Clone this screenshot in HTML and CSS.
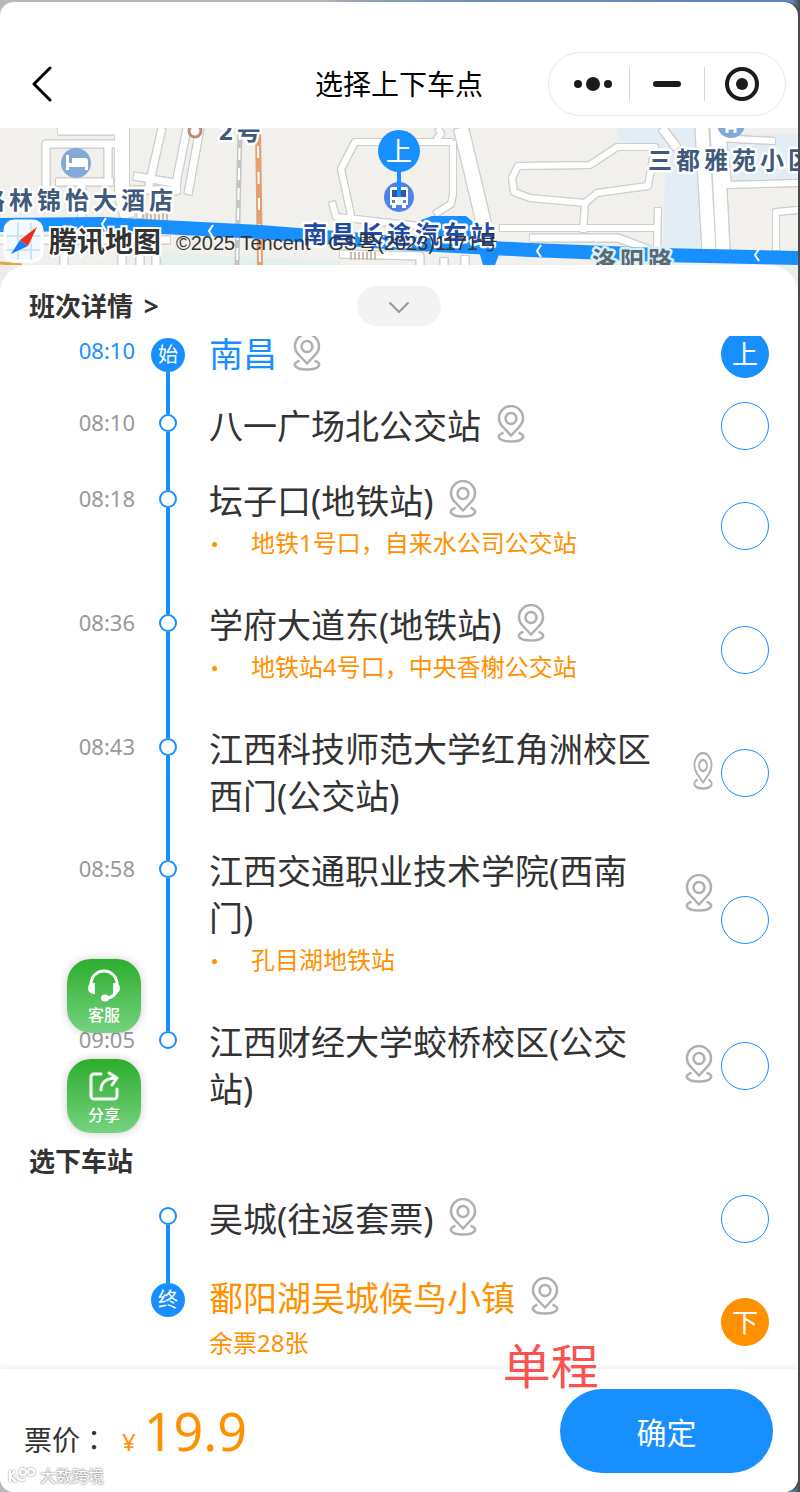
FILE: index.html
```html
<!DOCTYPE html>
<html lang="zh-CN">
<head>
  <meta charset="UTF-8">
  <meta name="viewport" content="width=device-width, initial-scale=1">
  <title>选择上下车点</title>
  <link rel="stylesheet" href="styles.css">
</head>

<body>
  <!-- shared icons -->
  <svg class="sprite" aria-hidden="true">
    <symbol id="pin" viewBox="0 0 28 38" preserveAspectRatio="none">
      <path d="M14 30.500L5.500 21.500A12 12 0 1 1 22.500 21.500Z" />
      <circle cx="14" cy="13.500" r="5.500" />
      <path d="M6.500 27.800C-1 30 0 36.500 14 36.500S29 30 21.500 27.800" />
    </symbol>
  </svg>

  <div class="app">
    <header class="topbar">
      <button class="back" aria-label="返回">
        <svg width="22" height="36" viewBox="0 0 22 36"><path d="M19 2L3 18L19 34" /></svg>
      </button>
      <h1>选择上下车点</h1>
      <div class="capsule">
        <button aria-label="更多">
          <svg width="40" height="20" viewBox="0 0 40 20"><circle cx="6" cy="10" r="4" /><circle cx="21" cy="10" r="7" /><circle cx="36" cy="10" r="4" /></svg>
        </button>
        <button aria-label="最小化">
          <svg width="28" height="6" viewBox="0 0 28 6"><rect width="28" height="6" rx="3" /></svg>
        </button>
        <button aria-label="关闭">
          <svg width="36" height="36" viewBox="0 0 36 36"><circle class="ring" cx="18" cy="18" r="15" /><circle cx="18" cy="18" r="6" /></svg>
        </button>
      </div>
    </header>

    <div class="map">
      <svg viewBox="0 0 798 137" preserveAspectRatio="xMidYMid slice">
        <defs>
          <g id="roads">
            <path stroke-width="7" d="M58 3H120M46 62V16H116M56 54H113M82 56V96M108 16V54" />
            <path stroke-width="7" d="M120 62H180M134 48L180 56M162 0L148 62M187 0L174 66M188 66L200 0M141 70V90" />
            <path stroke-width="14" d="M122 0V68L128 90" />
            <path stroke-width="7" d="M0 112H170M64 110V140M122 118V140M140 112V140M156 118V140" />
            <path stroke-width="6" d="M352 92L341 41L355 14H453M438 0L441 6L436 12M332 74L336 89L420 98M453 13V66L451 76L435 86" />
            <path stroke-width="14" d="M461 0L484 96" />
            <path stroke-width="6" d="M585 75L530 70L514 64L512 50L518 38L590 37L617 19H655L648 58L597 65L585 75L583 104M500 100H657M658 80L657 122" />
            <path stroke-width="8" d="M662 0L677 20" />
            <path stroke-width="7" d="M530 110H618L650 122M340 126L420 128V140M444 130V140M465 128V140" />
            <path stroke-width="13" d="M702 0L709 122M717 0L723 122" />
            <path stroke-width="6" d="M717 10L775 13M723 12L728 57L798 55M776 122V84L798 82" />
          </g>
          <clipPath id="tile"><rect x="5" y="93" width="37" height="40" rx="9" /></clipPath>
        </defs>

        <rect width="798" height="137" fill="#f1f0ed" />
        <path fill="#e2edf6" d="M616 0H697L702 122H663L665 50L652 19L620 13Z" />
        <path fill="#e2edf6" d="M718 6H798V60H720Z" />
        <path fill="#e4f1ea" d="M165 125L340 133V137H150Z" />

        <use href="#roads" class="road-edge" />
        <use href="#roads" class="road" />
        <path class="stairs" d="M142 89H168M350 128H376" />

        <path stroke="#c4c4c4" stroke-width="5" d="M240 0L237 137" />
        <path stroke="#fff" stroke-width="2" stroke-dasharray="12 8" d="M240 0L237 137" />
        <path stroke="#e5a070" stroke-width="6" d="M258 0L260 137" />
        <path stroke="#fff" stroke-width="2" stroke-dasharray="12 14" d="M258 18L260 137" />
        <path stroke="#e3a83a" stroke-width="3" d="M0 135L22 137" />

        <path fill="#188fff" d="M421 92L432 88L466 88L478 98L500 124L495 137H483L478 120L425 108Z" />
        <path class="route" d="M0 97L103 96L260 104L400 115L530 122L660 127L798 130" />
        <path class="arrow" d="M106 90L102 96L106 103M213 97L209 103L213 110M541 117L537 123L541 129M759 121L755 127L759 133" />

        <circle cx="195" cy="3" r="6" fill="#fff" stroke="#b98c7d" stroke-width="3" />
        <circle cx="731" cy="-4" r="14" fill="#82a9d8" />
        <path stroke="#fff" stroke-width="3" d="M727 -2V5M735 -2V5M727 0H735" />
        <circle cx="76" cy="35" r="15" fill="#82a9d8" />
        <path fill="#fff" d="M66 27h3v8h3v-5h13a3 3 0 0 1 3 3v9h-3v-3H69v3h-3z" />

        <text class="label" x="-19" y="81">格林锦怡大酒店</text>
        <text class="label" x="219" y="12">2号</text>
        <text class="label" x="648" y="41">三都雅苑小区</text>
        <text class="label road-name" x="592" y="141">洛阳路</text>
        <text class="label station" x="303" y="115">南昌长途汽车站</text>

        <!-- bus station and boarding marker -->
        <circle cx="399" cy="69" r="15" fill="#4f83e8" />
        <path fill="#fff" d="M392 59h14a2 2 0 0 1 2 2v16h-2v3h-4v-3h-6v3h-4v-3h-2V61a2 2 0 0 1 2-2z" />
        <path fill="#33569c" d="M392 62h14v7h-14z" />
        <path fill="#4f83e8" d="M392 72h3v3h-3zM403 72h3v3h-3z" />
        <rect x="397" y="42" width="4" height="27" fill="#188fff" />
        <circle cx="399" cy="23" r="21" fill="#188fff" />
        <text class="marker" x="399" y="33">上</text>

        <g clip-path="url(#tile)">
          <rect x="5" y="93" width="37" height="40" fill="#f3f9ff" />
          <path fill="none" stroke="#c8e6f5" stroke-width="2" d="M5 108H42M5 122H42M18 93V133M31 93V133" />
          <path fill="#f02d1c" d="M37 99L20 112L28 118Z" />
          <path fill="#1f7cf0" d="M11 126L20 112L28 118Z" />
        </g>
        <rect class="tile-edge" x="5" y="93" width="37" height="40" rx="9" />
        <text class="brand" x="49" y="124">腾讯地图</text>
        <text class="copyright" x="176" y="122">©2025 Tencent - GS粤(2023)1171号</text>
      </svg>
    </div>

    <main class="sheet">
      <div class="sheet-head">
        <a class="section-title" href="#detail">班次详情 <span>&gt;</span></a>
        <button class="handle" aria-label="收起">
          <svg width="22" height="14" viewBox="0 0 22 14"><path d="M2 2L11 11L20 2" /></svg>
        </button>
      </div>

      <div class="stops" id="detail">
        <div class="stop start">
          <time>08:10</time>
          <div class="rail"><span class="badge">始</span></div>
          <div class="stop-main">
            <div class="info">
              <div class="name"><span>南昌</span><svg class="pin"><use href="#pin" /></svg></div>
            </div>
            <label class="pick"><input type="radio" name="on" aria-label="南昌" checked><span>上</span></label>
          </div>
        </div>

        <div class="stop">
          <time>08:10</time>
          <div class="rail"><i class="dot"></i></div>
          <div class="stop-main">
            <div class="info">
              <div class="name"><span>八一广场北公交站</span><svg class="pin"><use href="#pin" /></svg></div>
            </div>
            <label class="pick"><input type="radio" name="on" aria-label="八一广场北公交站"></label>
          </div>
        </div>

        <div class="stop">
          <time>08:18</time>
          <div class="rail"><i class="dot"></i></div>
          <div class="stop-main">
            <div class="info">
              <div class="name"><span>坛子口(地铁站)</span><svg class="pin"><use href="#pin" /></svg></div>
              <ul class="note"><li>地铁1号口，自来水公司公交站</li></ul>
            </div>
            <label class="pick"><input type="radio" name="on" aria-label="坛子口(地铁站)"></label>
          </div>
        </div>

        <div class="stop">
          <time>08:36</time>
          <div class="rail"><i class="dot"></i></div>
          <div class="stop-main">
            <div class="info">
              <div class="name"><span>学府大道东(地铁站)</span><svg class="pin"><use href="#pin" /></svg></div>
              <ul class="note"><li>地铁站4号口，中央香榭公交站</li></ul>
            </div>
            <label class="pick"><input type="radio" name="on" aria-label="学府大道东(地铁站)"></label>
          </div>
        </div>

        <div class="stop">
          <time>08:43</time>
          <div class="rail"><i class="dot"></i></div>
          <div class="stop-main">
            <div class="info">
              <div class="name long"><span>江西科技师范大学红角洲校区西门(公交站)</span><svg class="pin narrow"><use href="#pin" /></svg></div>
            </div>
            <label class="pick"><input type="radio" name="on" aria-label="江西科技师范大学红角洲校区西门(公交站)"></label>
          </div>
        </div>

        <div class="stop">
          <time>08:58</time>
          <div class="rail"><i class="dot"></i></div>
          <div class="stop-main">
            <div class="info">
              <div class="name long"><span>江西交通职业技术学院(西南门)</span><svg class="pin"><use href="#pin" /></svg></div>
              <ul class="note"><li>孔目湖地铁站</li></ul>
            </div>
            <label class="pick"><input type="radio" name="on" aria-label="江西交通职业技术学院(西南门)"></label>
          </div>
        </div>

        <div class="stop last">
          <time>09:05</time>
          <div class="rail"><i class="dot"></i></div>
          <div class="stop-main">
            <div class="info">
              <div class="name long"><span>江西财经大学蛟桥校区(公交站)</span><svg class="pin"><use href="#pin" /></svg></div>
            </div>
            <label class="pick"><input type="radio" name="on" aria-label="江西财经大学蛟桥校区(公交站)"></label>
          </div>
        </div>

        <h2 class="section-title off-title">选下车站</h2>

        <div class="stop first">
          <time></time>
          <div class="rail"><i class="dot"></i></div>
          <div class="stop-main">
            <div class="info">
              <div class="name"><span>吴城(往返套票)</span><svg class="pin"><use href="#pin" /></svg></div>
            </div>
            <label class="pick"><input type="radio" name="off" aria-label="吴城(往返套票)"></label>
          </div>
        </div>

        <div class="stop end">
          <time></time>
          <div class="rail"><span class="badge">终</span></div>
          <div class="stop-main">
            <div class="info">
              <div class="name"><span>鄱阳湖吴城候鸟小镇</span><svg class="pin"><use href="#pin" /></svg></div>
              <p class="note">余票28张</p>
            </div>
            <label class="pick"><input type="radio" name="off" aria-label="鄱阳湖吴城候鸟小镇" checked><span>下</span></label>
          </div>
        </div>
      </div>
    </main>

    <footer class="paybar">
      <span class="trip">单程</span>
      <p class="price"><span>票价</span><span class="colon" lang="zh-TW">：</span><small>¥</small><strong>19.9</strong></p>
      <button class="confirm">确定</button>
      <div class="watermark">
        <svg width="30" height="18" viewBox="0 0 30 18">
          <path d="M2 3V15M2 9L7 4M2 9L8 15M9 9A5 5 0 0 0 17 12" />
          <circle cx="15" cy="5" r="3" />
          <circle cx="23" cy="5" r="3" />
        </svg>
        <span>大数跨境</span>
      </div>
    </footer>

    <div class="floats">
      <button class="float-btn">
        <svg width="34" height="34" viewBox="0 0 34 34">
          <path class="line" d="M4 19V15A13 13 0 0 1 30 15V19C30 25 25 29 19 29" />
          <path d="M8 14V25C4 25 1 23 1 19S4 14 8 14ZM26 14V25C30 25 33 23 33 19S30 14 26 14Z" />
          <ellipse cx="18" cy="29" rx="4" ry="3.500" />
        </svg>
        客服
      </button>
      <button class="float-btn">
        <svg width="34" height="34" viewBox="0 0 34 34">
          <path class="line" d="M14 5H7A3 3 0 0 0 4 8V27A3 3 0 0 0 7 30H27A3 3 0 0 0 30 27V20M14 21C14 14 19 9 29 9M22 4L30 9L25 16" />
        </svg>
        分享
      </button>
    </div>
  </div>
</body>
</html>
```

FILE: styles.css
```css
:root {
  --blue: #188fff;
  --orange: #ff9100;
  --text: #333;
  --muted: #999;
}

* {
  box-sizing: border-box;
}

body {
  margin: 0;
  padding: 2px 2px 0 0;
  background: linear-gradient(90deg, #b9b9b7 0 40%, #9aa3b3 44%, #6f8fb8 60%, #5b86bb 99%, #4a4a4c 100%);
  font-family: "Noto Sans", "Noto Sans CJK SC", sans-serif;
  color: var(--text);
}

button {
  border: none;
  padding: 0;
  background: none;
  color: inherit;
  font: inherit;
  cursor: pointer;
}

h1, h2, p, ul {
  margin: 0;
}

.sprite {
  display: none;
}

.app {
  position: relative;
  display: flex;
  flex-direction: column;
  min-height: calc(100vh - 2px);
  background: #fff;
  border-radius: 14px;
  overflow: hidden;
  box-shadow: 2px 0 0 #4a4a4c;
}

/* top bar */
.topbar {
  display: grid;
  grid-template-columns: 1fr auto 1fr;
  align-items: center;
  padding: 50px 12px 12px;
}

.topbar h1 {
  font-size: 28px;
  line-height: 40px;
  font-weight: 400;
  color: #000;
}

.back {
  justify-self: start;
  padding: 0 19px;
  height: 36px;
}

.back svg, .handle svg {
  display: block;
  fill: none;
  stroke: #000;
  stroke-width: 3;
  stroke-linecap: round;
  stroke-linejoin: round;
}

.capsule {
  justify-self: end;
  display: flex;
  align-items: center;
  width: 238px;
  height: 64px;
  padding: 0 6px;
  border: 1px solid #e8e8e8;
  border-radius: 32px;
}

.capsule button {
  flex: 1;
  display: flex;
  align-items: center;
  justify-content: center;
  height: 34px;
}

.capsule button + button {
  border-left: 1px solid #d8d8d8;
}

.capsule svg {
  fill: #1b1b1b;
}

.capsule .ring {
  fill: none;
  stroke: #1b1b1b;
  stroke-width: 4;
}

/* map */
.map svg {
  display: block;
  width: 100%;
  height: 137px;
}

.road, .road-edge {
  fill: none;
  stroke: #fff;
  stroke-linejoin: round;
}

.road-edge {
  stroke: #cfcfcd;
  filter: drop-shadow(1px 0 0 #cfcfcd) drop-shadow(-1px 0 0 #cfcfcd) drop-shadow(0 1px 0 #cfcfcd) drop-shadow(0 -1px 0 #cfcfcd);
}

.stairs {
  stroke: #c9bfa8;
  stroke-width: 8;
  stroke-dasharray: 2 2;
}

.route {
  fill: none;
  stroke: var(--blue);
  stroke-width: 14;
}

.arrow {
  fill: none;
  stroke: #fff;
  stroke-width: 2;
}

.label {
  font-size: 24px;
  font-weight: 700;
  letter-spacing: 4px;
  fill: #41597a;
  stroke: #fff;
  stroke-width: 5;
  stroke-linejoin: round;
  paint-order: stroke;
}

.label.station {
  fill: #1f4aa5;
}

.label.road-name {
  fill: #5b6772;
  stroke: #d5f1f8;
}

.marker {
  font-size: 26px;
  fill: #fff;
  text-anchor: middle;
}

.tile-edge {
  fill: none;
  stroke: #fff;
  stroke-width: 3;
}

.brand {
  font-size: 28px;
  font-weight: 700;
  fill: #333;
  stroke: #fff;
  stroke-width: 4;
  paint-order: stroke;
}

.copyright {
  font-family: "Liberation Sans", "Noto Sans CJK SC", sans-serif;
  font-size: 20px;
  fill: #333;
}

/* sheet */
.sheet {
  flex: 1;
  background: linear-gradient(#ececec 0 40px, #fff 40px);
}

.sheet-head {
  display: grid;
  grid-template-columns: 1fr auto 1fr;
  align-items: center;
  height: 71px;
  padding: 10px 29px 0;
  background: #fff;
  border-radius: 28px 28px 0 0;
}

.section-title {
  font-size: 26px;
  line-height: 40px;
  font-weight: 700;
  color: var(--text);
  text-decoration: none;
}

.section-title span {
  margin-left: 4px;
}

.handle {
  display: flex;
  align-items: center;
  justify-content: center;
  width: 84px;
  height: 40px;
  padding-top: 4px;
  border-radius: 20px;
  background: #f3f3f3;
}

.handle svg {
  stroke: #999;
  stroke-width: 2;
}

.stops {
  overflow: hidden;
}

.stop {
  display: flex;
}

.stop time {
  width: 135px;
  font-size: 22px;
  line-height: 40px;
  text-align: right;
  color: var(--muted);
}

.rail {
  display: flex;
  flex-direction: column;
  align-items: center;
  width: 66px;
  margin-right: 8px;
}

.rail::before, .rail::after {
  content: "";
  width: 4px;
  height: 12px;
  background: var(--blue);
}

.rail::after {
  flex: 1;
}

.dot {
  width: 18px;
  height: 18px;
  border: 2px solid var(--blue);
  border-radius: 50%;
  background: #fff;
}

.badge {
  width: 34px;
  height: 34px;
  border-radius: 50%;
  background: var(--blue);
  color: #fff;
  font-size: 20px;
  line-height: 34px;
  text-align: center;
}

.stop-main {
  flex: 1;
  display: flex;
  align-items: center;
  padding: 0 29px 28px 0;
}

.info {
  flex: 1;
}

.name {
  display: flex;
  align-items: center;
  font-size: 34px;
  line-height: 47px;
}

.name.long {
  justify-content: space-between;
  padding-right: 8px;
}

.name.long span {
  flex: 0 1 448px;
}

.pin {
  flex: none;
  width: 28px;
  height: 38px;
  margin: 0 0 5px 16px;
  fill: none;
  stroke: #b0b0b0;
  stroke-width: 2.5;
}

.pin.narrow {
  width: 20px;
}

.note {
  margin-bottom: 13px;
  padding: 0;
  font-size: 24px;
  line-height: 36px;
  color: var(--orange);
  list-style: none;
}

.note li {
  display: flex;
}

.note li::before {
  content: "";
  width: 5px;
  height: 5px;
  margin: 17px 34px 0 3px;
  border-radius: 50%;
  background: var(--orange);
}

.pick {
  display: grid;
  width: 48px;
  height: 48px;
  place-items: center;
  cursor: pointer;
}

.pick input, .pick span {
  grid-area: 1 / 1;
}

.pick input {
  appearance: none;
  width: 48px;
  height: 48px;
  margin: 0;
  border: 1px solid var(--blue);
  border-radius: 50%;
}

.pick input:checked {
  background: var(--blue);
}

.pick span {
  z-index: 1;
  font-size: 26px;
  line-height: 40px;
  color: #fff;
}

.start {
  margin-top: -6px;
}

.start time, .start .name {
  color: var(--blue);
}

.start .stop-main {
  padding-bottom: 24px;
}

.start .rail::before, .end .rail::before {
  height: 8px;
}

.start .rail::before, .first .rail::before {
  background: none;
}

.last .rail::after, .end .rail::after {
  background: none;
}

.off-title {
  padding: 0 29px;
  margin-bottom: 14px;
}

.first .stop-main {
  padding-bottom: 32px;
}

.end .stop-main {
  padding-bottom: 0;
}

.end .name {
  color: var(--orange);
}

.end .note {
  margin-bottom: 8px;
  padding-top: 3px;
}

.end .pick input {
  border-color: var(--orange);
  background: var(--orange);
}

/* bottom bar */
.paybar {
  position: relative;
  display: flex;
  align-items: flex-start;
  justify-content: space-between;
  padding: 20px 25px 19px 24px;
  background: #fff;
  box-shadow: 0 -2px 6px rgba(0, 0, 0, 0.07);
}

.trip {
  position: absolute;
  top: -38px;
  left: 63%;
  font-size: 48px;
  line-height: 70px;
  color: #fa5151;
}

.price {
  display: flex;
  align-items: baseline;
  padding-top: 12px;
  font-size: 28px;
  line-height: 40px;
}

/* the TC face centres the full-width colon */
.colon {
  font-family: "Noto Sans CJK TC", sans-serif;
}

.price small {
  margin: 0 8px 0 14px;
  font-size: 24px;
  color: var(--orange);
}

.price strong {
  font-size: 52px;
  line-height: 60px;
  font-weight: 400;
  color: var(--orange);
}

.confirm {
  width: 213px;
  height: 84px;
  border-radius: 42px;
  background: var(--blue);
  color: #fff;
  font-size: 30px;
}

.watermark {
  position: absolute;
  left: 8px;
  bottom: 6px;
  display: flex;
  align-items: center;
  gap: 2px;
  font-size: 16px;
  line-height: 20px;
  color: #fff;
  text-shadow: 0 0 2px #888, 0 0 2px #888;
}

.watermark svg {
  fill: none;
  stroke: #fff;
  stroke-width: 2;
  filter: drop-shadow(0 0 1px #888);
}

/* floating buttons */
.floats {
  position: absolute;
  left: 67px;
  bottom: 359px;
  display: flex;
  flex-direction: column;
  gap: 26px;
}

.float-btn {
  display: flex;
  flex-direction: column;
  align-items: center;
  width: 74px;
  height: 74px;
  padding-top: 10px;
  border-radius: 24px;
  background: linear-gradient(#2dad2d, #76d281);
  box-shadow: 0 0 8px rgba(0, 0, 0, 0.2);
  color: #fff;
  font-size: 16px;
  line-height: 24px;
  font-weight: 500;
}

.float-btn svg {
  fill: #fff;
}

.float-btn .line {
  fill: none;
  stroke: #fff;
  stroke-width: 3;
  stroke-linecap: round;
  stroke-linejoin: round;
}
```
